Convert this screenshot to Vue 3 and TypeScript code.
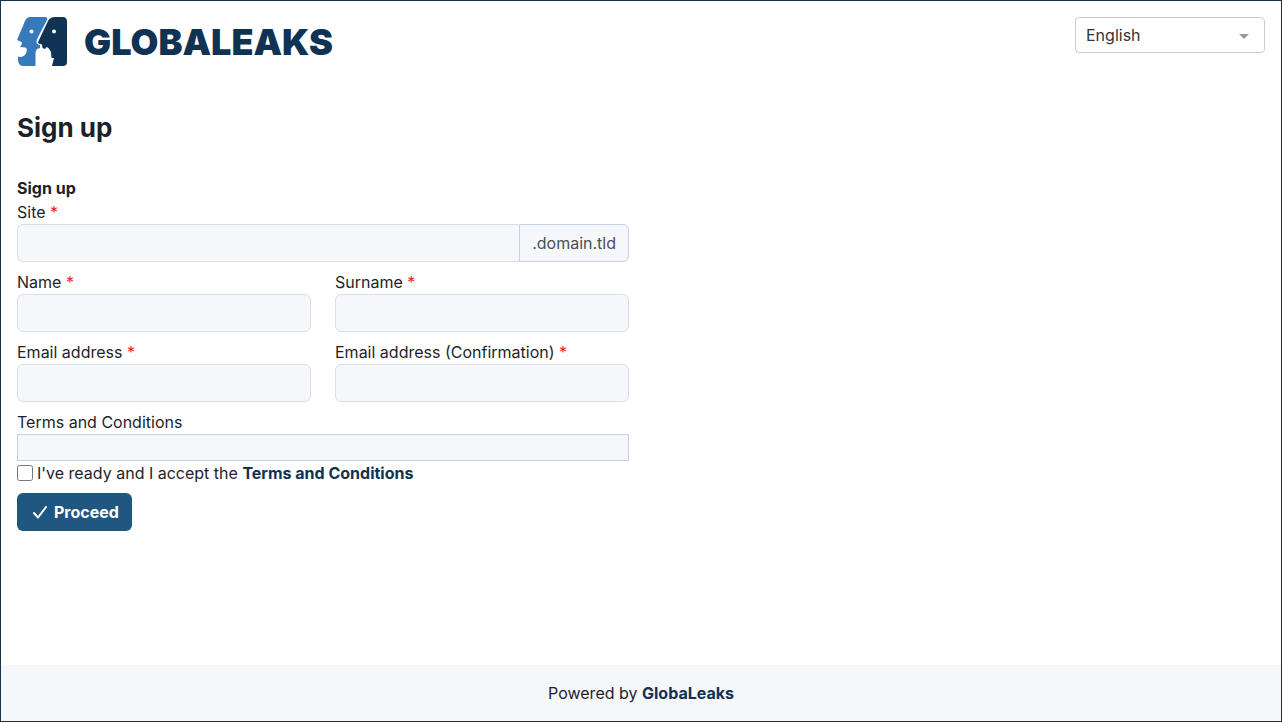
<script setup lang="ts">
import { reactive, ref } from 'vue'

interface Field {
  id: 'name' | 'surname' | 'email' | 'confirmation'
  label: string
  type: string
}

const fields: Field[] = [
  { id: 'name', label: 'Name', type: 'text' },
  { id: 'surname', label: 'Surname', type: 'text' },
  { id: 'email', label: 'Email address', type: 'email' },
  { id: 'confirmation', label: 'Email address (Confirmation)', type: 'email' },
]

const form = reactive({ site: '', name: '', surname: '', email: '', confirmation: '', accepted: false })
const language = ref('en')
</script>

<template>
  <div class="page">
    <header class="header">
      <a class="brand" href="#" aria-label="Globaleaks">
        <svg class="mark" viewBox="0 0 50 50" aria-hidden="true">
          <path fill="#377abc" d="M13 0H28Q31 0 30 3L20 22Q19 25 20 27L23 28L23 31L20 32L18.500 35V49H6Q1 49 1 42V39.500Q6 41 9 36.500Q11 31 8 30.500L3 30L5 27L4.500 25L0 23L8 4Q10 0 13 0Z" />
          <path fill="#103253" d="M38 0H45.500Q50 0 50 4.500V45Q50 49 46 49H35L37 41L34.500 41L34 35L31.500 31L29.500 30L28 32L25.500 31L25 27.500L21.500 26.500Q20.500 25.500 22 23L31 4Q33 0 38 0Z" />
          <circle cx="14.500" cy="14.500" r="2" fill="#fff" />
          <circle cx="37" cy="14.500" r="2" fill="#fff" />
        </svg>
        <span class="wordmark">GLOBALEAKS</span>
      </a>
      <div class="language">
        <select v-model="language" aria-label="Language">
          <option value="en">English</option>
        </select>
        <svg class="caret" viewBox="0 0 10 5" aria-hidden="true"><path fill="#999" d="M0 0H10L5 5Z" /></svg>
      </div>
    </header>

    <main class="main">
      <h1>Sign up</h1>
      <form class="form" @submit.prevent>
        <h2>Sign up</h2>
        <div class="field wide">
          <label for="site">Site <span class="required">*</span></label>
          <div class="group">
            <input id="site" v-model="form.site" type="text" />
            <span class="suffix">.domain.tld</span>
          </div>
        </div>
        <div v-for="field in fields" :key="field.id" class="field">
          <label :for="field.id">{{ field.label }} <span class="required">*</span></label>
          <input :id="field.id" v-model="form[field.id]" :type="field.type" />
        </div>
        <div class="terms wide">
          <div>Terms and Conditions</div>
          <div class="terms-text"></div>
          <div class="accept">
            <input id="accept" v-model="form.accepted" type="checkbox" />
            <label for="accept">I've ready and I accept the <a href="#">Terms and Conditions</a></label>
          </div>
        </div>
        <button class="proceed" type="submit">
          <svg viewBox="0 0 16 16" aria-hidden="true"><path d="M2 9L6 13.500L14 3" /></svg>
          <span>Proceed</span>
        </button>
      </form>
    </main>

    <footer class="footer">
      <span>Powered by <a href="#">GlobaLeaks</a></span>
    </footer>
  </div>
</template>

<style>
body {
  margin: 0;
}
</style>

<style scoped>
.page,
.page * {
  box-sizing: border-box;
}
.page {
  display: flex;
  flex-direction: column;
  min-height: 100vh;
  border: 1px solid #103253;
  background: #fff;
  color: #1d1f2a;
  font: 16px/24px Inter, sans-serif;
}
a {
  color: #103253;
  font-weight: 700;
  text-decoration: none;
}
input,
select,
button {
  margin: 0;
  color: inherit;
  font: inherit;
}
.header {
  display: flex;
  align-items: flex-start;
  justify-content: space-between;
  padding: 16px;
}
.brand {
  display: flex;
  align-items: center;
  gap: 17px;
}
.mark {
  width: 50px;
  height: 50px;
}
.wordmark {
  font-size: 36px;
  font-weight: 900;
  line-height: 50px;
}
.language {
  position: relative;
  width: 190px;
}
.language select {
  display: block;
  width: 100%;
  height: 36px;
  padding: 0 10px;
  border: 1px solid #ccc;
  border-radius: 4px;
  background: #fff;
  color: #333;
  appearance: none;
}
.caret {
  position: absolute;
  top: 17px;
  right: 16px;
  width: 10px;
  height: 5px;
  pointer-events: none;
}
.main {
  flex: 1;
  padding: 28px 16px 16px;
}
h1 {
  margin: 0 0 31px;
  font-size: 26px;
  font-weight: 700;
  line-height: 34px;
}
.form {
  display: grid;
  grid-template-columns: 1fr 1fr;
  column-gap: 24px;
  width: calc(50% - 12px);
}
h2 {
  grid-column: 1 / -1;
  margin: 0;
  font-size: 16px;
  font-weight: 700;
  line-height: 24px;
}
.wide {
  grid-column: 1 / -1;
}
.field {
  margin-bottom: 8px;
}
.field > label {
  display: block;
}
.required {
  color: #ee1c1c;
}
.field input {
  display: block;
  width: 100%;
  height: 38px;
  padding: 6px 12px;
  border: 1px solid #dae0eb;
  border-radius: 6px;
  background: #f5f7fb;
}
.group {
  display: flex;
}
.field .group input {
  flex: 1;
  min-width: 0;
  border-right: 0;
  border-radius: 6px 0 0 6px;
}
.suffix {
  padding: 6px 12px;
  border: 1px solid #c5d0e0;
  border-radius: 0 6px 6px 0;
  background: #f5f7fb;
  color: #495057;
}
.terms-text {
  height: 27px;
  border: 1px solid #c5d0e0;
  background: #f5f7fb;
}
.accept {
  display: flex;
  align-items: center;
  gap: 4px;
  margin-bottom: 8px;
}
.accept input {
  width: 16px;
  height: 16px;
}
.proceed {
  display: flex;
  align-items: center;
  justify-self: start;
  gap: 6px;
  height: 38px;
  padding: 0 13px 0 15px;
  border: 0;
  border-radius: 6px;
  background: #205781;
  color: #fff;
  font-weight: 700;
}
.proceed svg {
  width: 16px;
  height: 16px;
  fill: none;
  stroke: #fff;
  stroke-width: 2;
  stroke-linecap: round;
  stroke-linejoin: round;
}
.footer {
  padding: 16px;
  background: #f5f7fb;
  text-align: center;
}
</style>
